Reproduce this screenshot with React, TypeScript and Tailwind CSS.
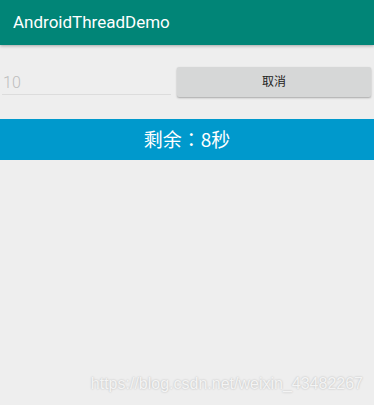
export default function App() {
  return (
    <div
      className="relative w-[374px] h-[405px] bg-[#eeeeee] overflow-hidden"
      style={{ fontFamily: 'Roboto, "Noto Sans CJK SC", sans-serif' }}
    >
      {/* app bar */}
      <div className="h-[45px] bg-[#018577] flex items-center pl-[13px] shadow-[0_1px_3px_rgba(0,0,0,0.3)]">
        <span className="text-white text-[17px]">AndroidThreadDemo</span>
      </div>

      {/* input + button row */}
      <div className="flex items-start mt-[22px] h-[52px]">
        <div className="w-[169px] ml-[2px] mt-[4px] border-b border-[#dcdcdc] h-[24px] flex items-center">
          <span className="text-[#bdbdbd] text-[16px] font-light pl-[1px]">10</span>
        </div>
        <button className="ml-[6px] w-[194px] h-[30px] bg-[#d6d7d7] rounded-[2px] shadow-[0_1px_2px_rgba(0,0,0,0.3)] text-[12px] text-[#222]">
          取消
        </button>
      </div>

      {/* countdown */}
      <div className="h-[41px] bg-[#0099cc] flex items-center justify-center">
        <span className="text-white text-[19px]" style={{ fontFamily: '"Noto Sans CJK TC", sans-serif' }}>
          剩余：8秒
        </span>
      </div>

      {/* watermark */}
      <div
        className="absolute right-[11px] bottom-[9px] text-[16px] text-[#f4f4f4] [text-shadow:0_0_2px_rgba(0,0,0,0.25)]"
        style={{ fontFamily: '"Liberation Sans", Arial, sans-serif' }}
      >
        https://blog.csdn.net/weixin_43482267
      </div>
    </div>
  );
}
